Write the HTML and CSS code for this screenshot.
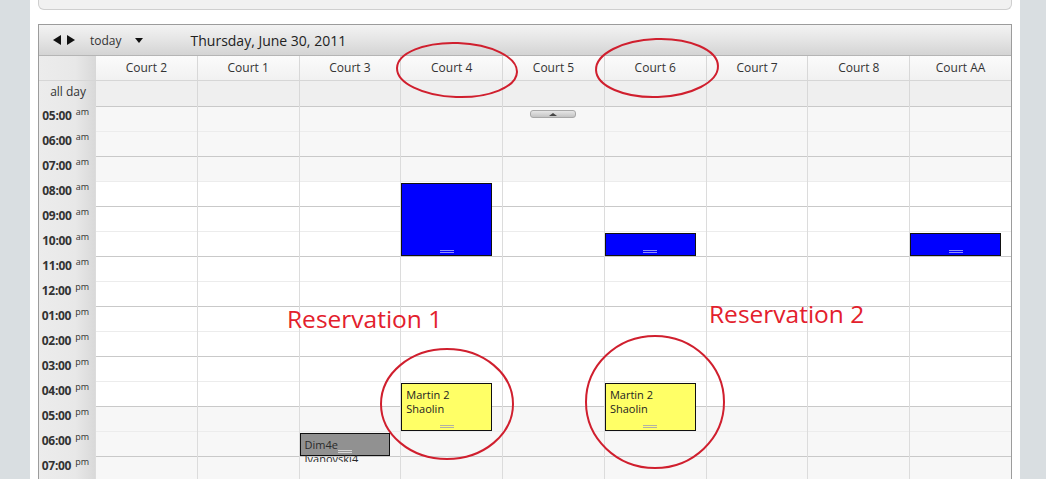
FILE: index.html
```html
<!DOCTYPE html>
<html>
<head>
  <title>Court Reservations</title>
  <link rel="stylesheet" href="styles.css">
</head>
<body>
  <div class="page">
    <div class="top-panel"></div>

    <div class="calendar">
      <div class="toolbar">
        <span class="nav-arrows"><span class="arrow-left"></span><span class="arrow-right"></span></span>
        <span class="today">today</span>
        <span class="caret"></span>
        <span class="title">Thursday, June 30, 2011</span>
      </div>

      <div class="head-row">
        <div class="axis-cell"></div>
        <div class="court">Court 2</div>
        <div class="court">Court 1</div>
        <div class="court">Court 3</div>
        <div class="court">Court 4</div>
        <div class="court">Court 5</div>
        <div class="court">Court 6</div>
        <div class="court">Court 7</div>
        <div class="court">Court 8</div>
        <div class="court">Court AA</div>
      </div>

      <div class="allday-row">
        <div class="axis-cell allday-label">all day</div>
        <div class="allday"></div><div class="allday"></div><div class="allday"></div>
        <div class="allday"></div><div class="allday"></div><div class="allday"></div>
        <div class="allday"></div><div class="allday"></div><div class="allday"></div>
      </div>

      <div class="slots" id="slots">
        <!-- court dividers -->
        <div class="divider" style="grid-column: 2"></div>
        <div class="divider" style="grid-column: 3"></div>
        <div class="divider" style="grid-column: 4"></div>
        <div class="divider" style="grid-column: 5"></div>
        <div class="divider" style="grid-column: 6"></div>
        <div class="divider" style="grid-column: 7"></div>
        <div class="divider" style="grid-column: 8"></div>
        <div class="divider" style="grid-column: 9"></div>
        <div class="divider" style="grid-column: 10"></div>

        <div class="scroll-up" style="grid-column: 6; grid-row: 1"><span></span></div>

        <div class="event blue" style="grid-column: 5; grid-row: 4 / 7"><i class="handle"></i></div>
        <div class="event blue" style="grid-column: 7; grid-row: 6 / 7"><i class="handle"></i></div>
        <div class="event blue" style="grid-column: 10; grid-row: 6 / 7"><i class="handle"></i></div>

        <div class="event yellow" style="grid-column: 5; grid-row: 12 / 14">
          <div class="event-text">Martin 2<br>Shaolin</div><i class="handle"></i>
        </div>
        <div class="event yellow" style="grid-column: 7; grid-row: 12 / 14">
          <div class="event-text">Martin 2<br>Shaolin</div><i class="handle"></i>
        </div>
        <div class="event grey" style="grid-column: 4; grid-row: 14 / 15">
          <div class="event-text clipped">Dim4e<br>Ivanovski4</div><i class="handle"></i>
        </div>
      </div>
    </div>
  </div>

  <svg class="marks" width="1046" height="479" viewBox="0 0 1046 479">
    <ellipse cx="457" cy="70" rx="60" ry="27" transform="rotate(2 457 70)"/>
    <ellipse cx="657" cy="68" rx="61" ry="29" transform="rotate(-2 657 68)"/>
    <ellipse cx="447" cy="404" rx="66" ry="55"/>
    <ellipse cx="655" cy="402" rx="69" ry="66"/>
    <text x="287" y="328">Reservation 1</text>
    <text x="709" y="323">Reservation 2</text>
  </svg>

  <script>
    // hour slots from 5am to 7pm
    var slots = document.getElementById('slots');
    var first = slots.firstChild;
    for (var i = 0; i < 15; i++) {
      var h = 5 + i;
      var hh = h > 12 ? h - 12 : h;
      var label = document.createElement('div');
      label.className = 'hour';
      label.style.gridRow = i + 1;
      label.innerHTML = (hh < 10 ? '0' : '') + hh + ':00<sup>' + (h < 12 ? 'am' : 'pm') + '</sup>';
      var row = document.createElement('div');
      row.className = 'slot' + (i % 2 ? ' minor' : '') + (h < 8 || h > 16 ? ' off' : '');
      row.style.gridRow = i + 1;
      slots.insertBefore(row, first);
      slots.insertBefore(label, first);
    }
  </script>
</body>
</html>
```

FILE: styles.css
```css
body {
  margin: 0;
  background-color: #d9dee1;
  font-family: 'Open Sans', 'Liberation Sans', sans-serif;
  color: #333;
  position: relative;
  overflow: hidden;
  height: 479px;
}
.page {
  margin-left: 30px;
  width: 974px;
  padding: 0 8px;
  background: white;
  height: 479px;
}
.top-panel {
  height: 10px;
  box-sizing: border-box;
  background: #f1f1f1;
  border: 1px solid #cfcfcf;
  border-top: none;
  border-radius: 0 0 6px 6px;
  margin-bottom: 14px;
}
.calendar {
  border: 1px solid #9c9c9c;
  border-bottom: none;
}
.toolbar {
  height: 31px;
  box-sizing: border-box;
  border-bottom: 1px solid #b5b5b5;
  background: linear-gradient(#f3f3f3, #e6e6e6 45%, #d4d4d4);
  display: flex;
  align-items: center;
}
.nav-arrows {
  display: flex;
  gap: 6px;
  margin-left: 14px;
}
.arrow-left, .arrow-right {
  width: 0;
  height: 0;
  border-top: 5px solid transparent;
  border-bottom: 5px solid transparent;
}
.arrow-left { border-right: 8px solid #111; }
.arrow-right { border-left: 8px solid #111; }
.today {
  font-size: 12px;
  margin-left: 15px;
  color: #333;
}
.caret {
  width: 0;
  height: 0;
  border-left: 4px solid transparent;
  border-right: 4px solid transparent;
  border-top: 5px solid #111;
  margin-left: 13px;
}
.title {
  font-size: 14px;
  color: #222;
  margin-left: 48px;
}
.head-row, .allday-row, .slots {
  display: grid;
  grid-template-columns: 56px repeat(9, 1fr);
}
.head-row {
  height: 25px;
  box-sizing: border-box;
  border-bottom: 1px solid #d6d6d6;
}
.axis-cell {
  background: linear-gradient(to right, #ececec, #e8e8e8 65%, #d9d9d9);
}
.court {
  font-size: 12px;
  text-align: center;
  line-height: 24px;
  border-left: 1px solid #d8d8d8;
  background: linear-gradient(#fbfbfb, #f1f1f1);
}
.allday-row {
  height: 25px;
}
.allday-label {
  font-size: 12px;
  text-align: right;
  padding-right: 9px;
  line-height: 22px;
}
.allday {
  background: #efefef;
  border-left: 1px solid #d8d8d8;
}
.slots {
  grid-template-rows: repeat(15, 25px);
}
.slot {
  grid-column: 2 / 11;
  border-top: 1px solid #c9c9c9;
  background: white;
}
.slot.minor { border-top-color: #ececec; }
.slot.off { background: #f7f7f7; }
.hour {
  grid-column: 1;
  font-size: 12px;
  font-weight: bold;
  letter-spacing: -0.3px;
  line-height: 12px;
  white-space: nowrap;
  color: #333;
  text-align: right;
  padding-right: 6px;
  background: linear-gradient(to right, #ececec, #e8e8e8 65%, #d9d9d9);
}
.hour sup {
  font-size: 9px;
  font-weight: normal;
  letter-spacing: 0;
  vertical-align: 5px;
  margin-left: 4px;
}
.divider {
  grid-row: 1 / -1;
  border-left: 1px solid #dcdcdc;
}
.scroll-up {
  justify-self: center;
  align-self: start;
  margin-top: 4px;
  width: 46px;
  height: 8px;
  box-sizing: border-box;
  border: 1px solid #a8a8a8;
  border-radius: 3px;
  background: linear-gradient(#e6e6e6, #c4c4c4);
  display: flex;
  justify-content: center;
  align-items: center;
}
.scroll-up span {
  width: 0;
  height: 0;
  border-left: 4px solid transparent;
  border-right: 4px solid transparent;
  border-bottom: 3px solid #444;
}
.event {
  position: relative;
  margin: 2px 10px 0 1px;
  border: 1px solid #111;
  font-size: 11px;
  line-height: 14px;
  color: #222;
}
.event.blue { background: #0000ff; }
.event.yellow { background: #ffff66; }
.event.grey { background: #919191; color: #2a2a2a; }
.event-text {
  padding: 4px 4px 0;
}
.event-text.clipped {
  height: 28px;
  box-sizing: border-box;
  overflow: hidden;
  margin-bottom: -6px;
}
.handle {
  position: absolute;
  bottom: 2px;
  left: 50%;
  width: 14px;
  margin-left: -7px;
  height: 1px;
  border-top: 1px solid rgba(180, 180, 255, 0.8);
  border-bottom: 1px solid rgba(180, 180, 255, 0.8);
}
.event.yellow .handle {
  border-color: rgba(170, 170, 170, 0.9);
}
.event.grey .handle { border-color: rgba(235, 235, 235, 0.8); }
.marks {
  position: absolute;
  top: 0;
  left: 0;
  pointer-events: none;
}
.marks ellipse {
  fill: none;
  stroke: #d01f2e;
  stroke-width: 2;
}
.marks text {
  fill: #e3202c;
  font-family: 'Open Sans', 'Liberation Sans', sans-serif;
  font-size: 24.5px;
}
```
